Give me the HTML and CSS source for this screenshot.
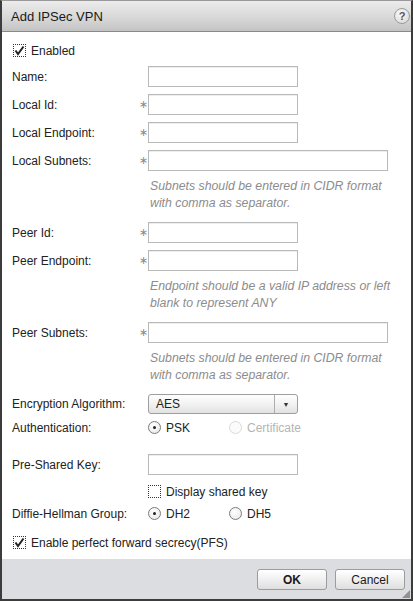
FILE: index.html
```html
<!DOCTYPE html>
<html>
<head>
<meta charset="utf-8">
<link rel="stylesheet" href="styles.css">
</head>
<body>
<div class="dialog">
  <div class="titlebar">
    <span class="title">Add IPSec VPN</span>
    <span class="help">?</span>
  </div>
  <div class="content">
    <div class="row check-row">
      <span class="cb checked"><svg width="13" height="13" viewBox="0 0 13 13"><path d="M2.5 6.5 L5 10 L10.5 2.5" fill="none" stroke="#222" stroke-width="2"/></svg></span>
      <span class="cb-label">Enabled</span>
    </div>
    <div class="row r-name">
      <span class="label">Name:</span><span class="star"></span><span class="input short"></span>
    </div>
    <div class="row">
      <span class="label">Local Id:</span><span class="star">&#8727;</span><span class="input short"></span>
    </div>
    <div class="row">
      <span class="label">Local Endpoint:</span><span class="star">&#8727;</span><span class="input short"></span>
    </div>
    <div class="row">
      <span class="label">Local Subnets:</span><span class="star">&#8727;</span><span class="input long"></span>
    </div>
    <div class="hint">Subnets should be entered in CIDR format<br>with comma as separator.</div>
    <div class="row">
      <span class="label">Peer Id:</span><span class="star">&#8727;</span><span class="input short"></span>
    </div>
    <div class="row">
      <span class="label">Peer Endpoint:</span><span class="star">&#8727;</span><span class="input short"></span>
    </div>
    <div class="hint">Endpoint should be a valid IP address or left<br>blank to represent ANY</div>
    <div class="row">
      <span class="label">Peer Subnets:</span><span class="star">&#8727;</span><span class="input long"></span>
    </div>
    <div class="hint">Subnets should be entered in CIDR format<br>with comma as separator.</div>
    <div class="row r-select">
      <span class="label">Encryption Algorithm:</span><span class="star"></span>
      <span class="select"><span class="sel-value">AES</span><span class="sel-btn">&#9660;</span></span>
    </div>
    <div class="row r-radio">
      <span class="label">Authentication:</span><span class="star"></span>
      <span class="radio-group">
        <span class="radio-item"><span class="radio on"></span>PSK</span>
        <span class="radio-item disabled"><span class="radio"></span>Certificate</span>
      </span>
    </div>
    <div class="row r-psk">
      <span class="label">Pre-Shared Key:</span><span class="star"></span><span class="input short"></span>
    </div>
    <div class="row r-display">
      <span class="label"></span><span class="star"></span>
      <span class="cb"></span><span class="cb-label">Display shared key</span>
    </div>
    <div class="row r-dh">
      <span class="label">Diffie-Hellman Group:</span><span class="star"></span>
      <span class="radio-group">
        <span class="radio-item"><span class="radio on"></span>DH2</span>
        <span class="radio-item"><span class="radio"></span>DH5</span>
      </span>
    </div>
    <div class="row check-row r-pfs">
      <span class="cb checked"><svg width="13" height="13" viewBox="0 0 13 13"><path d="M2.5 6.5 L5 10 L10.5 2.5" fill="none" stroke="#222" stroke-width="2"/></svg></span>
      <span class="cb-label">Enable perfect forward secrecy(PFS)</span>
    </div>
  </div>
  <div class="footer">
    <button class="btn ok">OK</button>
    <button class="btn">Cancel</button>
    <span class="grip"></span>
  </div>
</div>
</body>
</html>
```
FILE: styles.css
```css
* { box-sizing: border-box; }
html, body { margin: 0; padding: 0; }
body {
  width: 413px;
  height: 601px;
  font-family: "Liberation Sans", Arial, sans-serif;
  font-size: 12px;
  color: #222;
  background: #fff;
}
.dialog {
  width: 413px;
  height: 601px;
  display: flex;
  flex-direction: column;
  border: 2px solid #3c3c3c;
  border-top: 1px solid #9a9a9a;
}
.titlebar {
  height: 31px;
  flex: none;
  display: flex;
  align-items: center;
  justify-content: space-between;
  padding: 0 1px 0 9px;
  background: linear-gradient(#ececec, #d6d6d6 60%, #c4c4c4);
  border-bottom: 1px solid #8a8a8a;
}
.title {
  font-size: 13px;
  color: #1a1a1a;
}
.help {
  width: 16px;
  height: 16px;
  border-radius: 50%;
  border: 1px solid #9c9c9c;
  background: radial-gradient(circle at 40% 35%, #fafafa, #d4d4d4);
  color: #555;
  font-size: 11px;
  font-weight: bold;
  display: flex;
  align-items: center;
  justify-content: center;
  line-height: 1;
}
.content {
  flex: 1;
  display: flex;
  flex-direction: column;
  padding: 12px 0 0 10px;
}
.row {
  display: flex;
  align-items: center;
  height: 21px;
  margin-top: 7px;
}
.check-row { height: 13px; margin-top: 0; padding-left: 1px; }
.r-name { margin-top: 9px; }
.label {
  width: 127px;
  flex: none;
}
.star {
  width: 9px;
  flex: none;
  color: #8a8a8a;
  font-family: "DejaVu Sans", sans-serif;
  font-size: 11px;
  padding-left: 0;
}
.input {
  height: 21px;
  border: 1px solid #b9b9b9;
  background: #fff;
  box-shadow: inset 0 1px 0 #eee;
}
.short { width: 150px; }
.long { width: 240px; }
.hint {
  margin: 7px 0 3px 138px;
  font-style: italic;
  font-size: 12.3px;
  color: #8c8c8c;
  line-height: 17px;
}
.r-select { height: 20px; }
.select {
  width: 150px;
  height: 20px;
  display: flex;
  border: 1px solid #9e9e9e;
  border-radius: 3px;
  background: linear-gradient(#ffffff, #f2f2f2 50%, #e2e2e2);
}
.sel-value {
  flex: 1;
  padding-left: 7px;
  line-height: 18px;
  border-right: 1px solid #adadad;
}
.sel-btn {
  width: 22px;
  font-size: 7px;
  color: #333;
  display: flex;
  align-items: center;
  justify-content: center;
}
.r-radio { height: 13px; margin-top: 7px; }
.radio-group { display: flex; }
.radio-item {
  width: 81px;
  display: flex;
  align-items: center;
  gap: 5px;
}
.radio-item.disabled { color: #b5b5b5; }
.radio {
  width: 13px;
  height: 13px;
  border-radius: 50%;
  border: 1px solid #7b7b7b;
  background: radial-gradient(circle at 40% 35%, #fff, #e6e6e6);
  display: flex;
  align-items: center;
  justify-content: center;
}
.disabled .radio { border-color: #dadada; background: #fbfbfb; }
.radio.on::after {
  content: "";
  width: 3px;
  height: 3px;
  border-radius: 50%;
  background: #222;
}
.r-psk { margin-top: 20px; }
.r-display { height: 13px; margin-top: 10px; }
.r-dh { height: 13px; margin-top: 9px; }
.r-pfs { margin-top: 16px; }
.cb {
  width: 13px;
  height: 13px;
  flex: none;
  border: 1px dotted #333;
  background: #fff;
  position: relative;
}
.cb svg { position: absolute; left: -1px; top: -1px; }
.cb-label { margin-left: 5px; }
.footer {
  height: 40px;
  flex: none;
  background: #dcdde0;
  display: flex;
  align-items: flex-start;
  justify-content: flex-end;
  padding: 10px 6px 0 0;
  gap: 8px;
  position: relative;
}
.btn {
  width: 70px;
  height: 21px;
  border: 1px solid #9c9c9c;
  border-radius: 3px;
  background: linear-gradient(#ffffff, #f0f0f0 50%, #dedede);
  font-family: "Liberation Sans", Arial, sans-serif;
  font-size: 12px;
  color: #1a1a1a;
  padding: 0;
}
.btn.ok { font-weight: bold; }
.grip {
  position: absolute;
  right: 1px;
  bottom: 1px;
  width: 8px;
  height: 8px;
  background: radial-gradient(circle, #8a8a8a 0.7px, transparent 0.8px) 0 0 / 2px 2px;
  clip-path: polygon(100% 0, 100% 100%, 0 100%);
}
```
